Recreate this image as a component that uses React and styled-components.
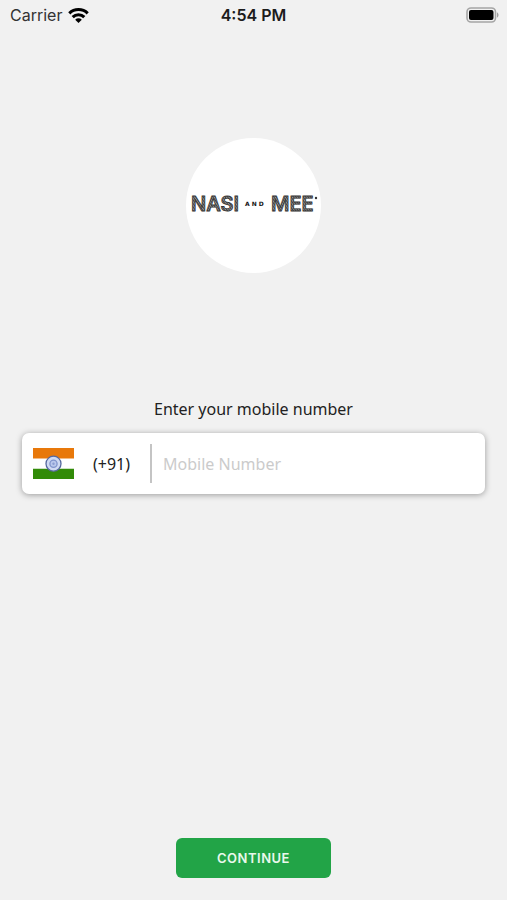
import React from "react";
import styled, { createGlobalStyle } from "styled-components";

const GlobalStyle = createGlobalStyle`
  *, *::before, *::after { box-sizing: border-box; }
  body { margin: 0; background: #f1f1f1; }
`;

const Screen = styled.div`
  min-height: 100vh;
  display: flex;
  flex-direction: column;
  background: #f1f1f1;
  color: #222;
  font-family: "Noto Sans", sans-serif;
`;

const StatusBar = styled.header`
  display: grid;
  grid-template-columns: 1fr auto 1fr;
  align-items: center;
  height: 30px;
  padding: 0 8px;
  font-family: Inter, sans-serif;
  font-size: 16px;
  line-height: 20px;
`;

const Carrier = styled.div`
  display: flex;
  align-items: center;
  gap: 6px;
  padding-left: 2px;
  color: #333;
`;

const Clock = styled.time`
  font-weight: 600;
  color: #1c1c1c;
`;

const BatterySlot = styled.div`
  display: flex;
  justify-content: flex-end;
`;

const Main = styled.main`
  flex: 1;
  display: flex;
  flex-direction: column;
  align-items: center;
  padding: 108px 22px 22px;
`;

const LogoDisc = styled.div`
  display: grid;
  place-items: center;
  width: 135px;
  height: 135px;
  border-radius: 50%;
  background: #fff;
`;

const Form = styled.form`
  flex: 1;
  align-self: stretch;
  display: flex;
  flex-direction: column;
  align-items: center;
  padding-top: 124px;
`;

const Label = styled.label`
  font-size: 16px;
  line-height: 24px;
`;

const PhoneField = styled.div`
  display: flex;
  align-items: center;
  align-self: stretch;
  height: 61px;
  margin-top: 12px;
  padding: 0 11px;
  border-radius: 7px;
  background: #fff;
  box-shadow: 0 1px 6px rgba(0, 0, 0, 0.36);
`;

const CountryButton = styled.button`
  display: flex;
  align-items: center;
  gap: 19px;
  padding: 0 20px 0 0;
  border: 0;
  background: none;
  color: inherit;
  font: inherit;
  font-size: 16px;
  line-height: 24px;
`;

const NumberInput = styled.input`
  flex: 1;
  min-width: 0;
  height: 39px;
  padding: 0 0 0 11px;
  border: 0;
  border-left: 2px solid #c4c4c4;
  outline: 0;
  background: none;
  color: #222;
  font: inherit;
  font-size: 16px;
  &::placeholder { color: #cbcbcb; opacity: 1; }
`;

const ContinueButton = styled.button`
  width: 155px;
  height: 40px;
  margin-top: auto;
  border: 0;
  border-radius: 6px;
  background: #22a447;
  color: #e9f8ec;
  font-family: Inter, sans-serif;
  font-size: 13px;
  font-weight: 600;
  letter-spacing: 0.5px;
`;

function WifiIcon() {
  return (
    <svg width="21" height="15" viewBox="0 0 21 15" aria-hidden="true">
      <g fill="none" stroke="#000" strokeWidth="3.1">
        <path d="M1.3 5.3a13.2 13.2 0 0 1 18.4 0" />
        <path d="M4.7 9.2a8.2 8.2 0 0 1 11.6 0" />
      </g>
      <path d="M10.5 15 7.2 11.7a4.6 4.6 0 0 1 6.6 0z" />
    </svg>
  );
}

function BatteryIcon() {
  return (
    <svg width="33" height="16" viewBox="0 0 33 16" role="img" aria-label="Battery full">
      <rect x="1" y="1" width="28.5" height="14" rx="4" fill="#f1f1f1" stroke="#a5a5a5" strokeWidth="1.6" />
      <rect x="3" y="3" width="24.5" height="10" rx="2" />
      <path d="M31 5.5c2 .6 2 4.4 0 5z" fill="#a0a0a0" />
    </svg>
  );
}

function Flag() {
  return (
    <svg width="41" height="31" viewBox="0 0 41 31" role="img" aria-label="India">
      <path fill="#fff" d="M0 0h41v31H0z" />
      <path fill="#e8780a" d="M0 0h41v10.5H0z" />
      <path fill="#328b08" d="M0 20.8h41V31H0z" />
      <circle cx="20.5" cy="15.7" r="7.5" fill="#cfd9f2" stroke="#56699f" strokeWidth="1.3" />
      <circle cx="20.5" cy="15.7" r="3.6" fill="#b9c7ec" stroke="#8094cc" strokeWidth="1.3" />
      <circle cx="20.5" cy="15.7" r="1.2" fill="#8c9ed2" />
    </svg>
  );
}

function Logo() {
  return (
    <svg width="128" height="26" viewBox="0 0 128 26" role="img" aria-label="Nasi and Mee">
      <defs>
        <pattern id="hatch" width="2" height="2" patternUnits="userSpaceOnUse" patternTransform="rotate(-35)">
          <path fill="#999" d="M0 0h2v2H0z" />
          <path fill="#444" d="M0 0h1v2H0z" />
        </pattern>
      </defs>
      <g fontFamily="Inter, sans-serif" fontWeight="600">
        <g fontSize="20" fill="url(#hatch)" stroke="#333" strokeWidth="0.8">
          <text x="1" y="18">NASI</text>
          <text x="81" y="18">MEE</text>
        </g>
      </g>
      <text x="55" y="13" fontFamily="DejaVu Sans, sans-serif" fontWeight="700" fontSize="6" letterSpacing="2" fill="#111">AND</text>
      <circle cx="126" cy="5" r="1.2" fill="#333" />
    </svg>
  );
}

export default function App() {
  return (
    <Screen>
      <GlobalStyle />
      <StatusBar>
        <Carrier>
          Carrier
          <WifiIcon />
        </Carrier>
        <Clock>4:54 PM</Clock>
        <BatterySlot>
          <BatteryIcon />
        </BatterySlot>
      </StatusBar>
      <Main>
        <LogoDisc>
          <Logo />
        </LogoDisc>
        <Form onSubmit={(event) => event.preventDefault()}>
          <Label htmlFor="mobile">Enter your mobile number</Label>
          <PhoneField>
            <CountryButton type="button">
              <Flag />
              (+91)
            </CountryButton>
            <NumberInput id="mobile" type="tel" placeholder="Mobile Number" />
          </PhoneField>
          <ContinueButton type="submit">CONTINUE</ContinueButton>
        </Form>
      </Main>
    </Screen>
  );
}
